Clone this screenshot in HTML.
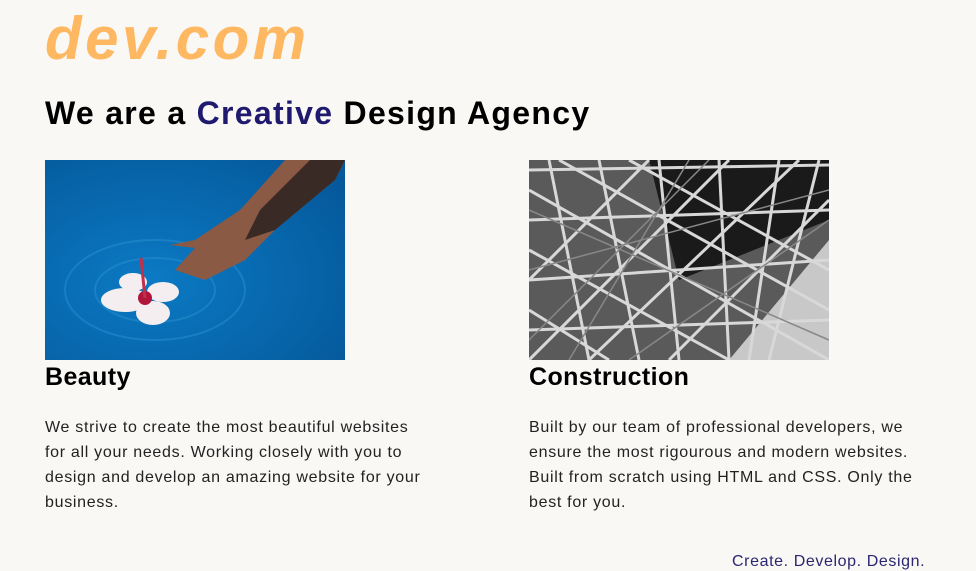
<!DOCTYPE html>
<html><head><meta charset="utf-8"><style>
body{margin:0;width:976px;height:571px;background:#f9f8f5;font-family:"Liberation Sans",sans-serif;position:relative;overflow:hidden;color:#111}
.a{position:absolute;white-space:nowrap}
.logo{left:45px;top:4px;font-size:60px;font-style:italic;font-weight:bold;color:#ffb862;letter-spacing:3.5px}
.h{left:45px;top:95px;font-size:32px;font-weight:bold;color:#000;letter-spacing:1.3px}
.h span{color:#1f1a6e}
.t{font-size:25px;font-weight:bold;color:#000;top:363px;letter-spacing:0.4px}
.p{font-size:16px;line-height:25px;top:415px;color:#222;letter-spacing:0.7px}
.f{left:732px;top:553px;font-size:16px;color:#2a2670;letter-spacing:0.6px}
</style></head><body>
<div class="a logo">dev.com</div>
<div class="a h">We are a <span>Creative</span> Design Agency</div>
<svg class="a" style="left:45px;top:160px" width="300" height="200" viewBox="0 0 300 200">
<defs><radialGradient id="w" cx="0.35" cy="0.6" r="0.8"><stop offset="0" stop-color="#0b7ac4"/><stop offset="1" stop-color="#05589a"/></radialGradient></defs>
<rect width="300" height="200" fill="url(#w)"/>
<ellipse cx="110" cy="130" rx="90" ry="50" fill="none" stroke="#2a8fd0" stroke-width="2" opacity=".5"/>
<ellipse cx="110" cy="130" rx="60" ry="32" fill="none" stroke="#2a8fd0" stroke-width="2" opacity=".5"/>
<path d="M300 0 L240 0 L195 50 L150 80 L125 85 L150 88 L130 110 L160 120 L200 100 L230 70 L290 20Z" fill="#8a5a45"/>
<path d="M300 0 L265 0 L215 50 L200 80 L230 70 L290 20Z" fill="#3a2a25"/>
<g fill="#f4eef0"><ellipse cx="80" cy="140" rx="24" ry="12"/><ellipse cx="108" cy="153" rx="17" ry="12"/><ellipse cx="118" cy="132" rx="16" ry="10"/><ellipse cx="88" cy="122" rx="14" ry="9"/></g>
<circle cx="100" cy="138" r="7" fill="#b0163c"/>
<line x1="100" y1="138" x2="96" y2="98" stroke="#c2304a" stroke-width="3"/>
</svg>
<svg class="a" style="left:529px;top:160px" width="300" height="200" viewBox="0 0 300 200">
<rect width="300" height="200" fill="#5a5a5a"/>
<path d="M120 0 H300 V60 L150 120Z" fill="#1a1a1a"/>
<path d="M200 200 L300 80 V200Z" fill="#c8c8c8"/>
<g stroke="#d8d8d8" stroke-width="3" fill="none">
<path d="M0 30 L300 200 M0 90 L200 200 M30 0 L300 150 M100 0 L300 110 M0 150 L80 200"/>
<path d="M20 0 L60 200 M70 0 L110 200 M130 0 L150 200 M190 0 L200 200 M250 0 L220 200 M290 0 L240 200"/>
<path d="M0 10 L300 5 M0 60 L300 50 M0 120 L300 100 M0 170 L300 160"/>
<path d="M0 200 L200 0 M60 200 L270 0 M0 120 L120 0 M140 200 L300 40"/>
</g>
<g stroke="#888" stroke-width="1.5" fill="none">
<path d="M0 50 L300 180 M0 110 L300 30 M40 200 L160 0 M100 200 L300 60 M0 180 L180 0"/>
</g>
</svg>
<div class="a t" style="left:45px">Beauty</div>
<div class="a t" style="left:529px">Construction</div>
<div class="a p" style="left:45px">We strive to create the most beautiful websites<br>for all your needs. Working closely with you to<br>design and develop an amazing website for your<br>business.</div>
<div class="a p" style="left:529px">Built by our team of professional developers, we<br>ensure the most rigourous and modern websites.<br>Built from scratch using HTML and CSS. Only the<br>best for you.</div>
<div class="a f">Create. Develop. Design.</div>
</body></html>
